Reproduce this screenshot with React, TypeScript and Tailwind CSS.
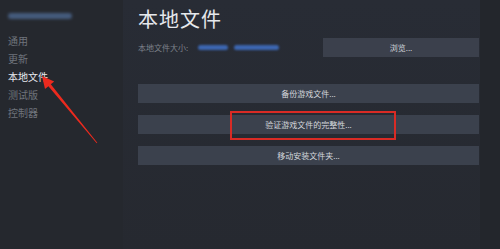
const font = { fontFamily: '"Noto Sans CJK SC", "Noto Sans", sans-serif' };

const navItems = ['通用', '更新', '本地文件', '测试版', '控制器'];

const actions = ['备份游戏文件...', '验证游戏文件的完整性...', '移动安装文件夹...'];

export default function App() {
  return (
    <div className="relative flex w-[500px] h-[249px] overflow-hidden bg-[#23262c]" style={font}>
      {/* sidebar */}
      <div className="w-[123px] shrink-0 bg-[#25282e] pl-[8px] pt-[13px]">
        <div className="h-[6px] w-[64px] rounded-sm bg-[#4d6890] blur-[1.5px] opacity-80" />
        <div className="mt-[14px] flex flex-col gap-[3px]">
          {navItems.map((item) => (
            <div
              key={item}
              className={`h-[15px] leading-[15px] text-[10px] ${item === '本地文件' ? 'text-[#e8eaee]' : 'text-[#6f747c]'}`}
            >
              {item}
            </div>
          ))}
        </div>
      </div>

      {/* main */}
      <div className="w-[357px] shrink-0 bg-gradient-to-b from-[#282c35] to-[#262930] pl-[15px] pr-[1px] pt-[6px]">
        <div className="text-[20px] leading-[26px] text-[#e6e8ec] tracking-[1px]">本地文件</div>
        <div className="mt-[6px] flex items-center h-[19px]">
          <span className="text-[8px] text-[#7d828b]">本地文件大小:</span>
          <span className="ml-[10px] h-[5px] w-[30px] rounded-sm bg-[#3c66b0] blur-[1px]" />
          <span className="ml-[6px] h-[5px] w-[45px] rounded-sm bg-[#3c66b0] blur-[1px]" />
          <button className="ml-auto w-[156px] h-[19px] bg-[#3b404c] text-[8px] text-[#cfd2d8]">浏览...</button>
        </div>
        <div className="mt-[27px] flex flex-col gap-[12px]">
          {actions.map((a) => (
            <button key={a} className="h-[19px] w-full bg-[#3b414d] text-[8px] text-[#d4d7dc]">
              {a}
            </button>
          ))}
        </div>
      </div>

      {/* red highlight box */}
      <div className="absolute left-[230px] top-[111px] w-[166px] h-[29px] border-2 border-[#d92b25]" />

      {/* red arrow */}
      <svg className="absolute left-0 top-0" width="500" height="249" viewBox="0 0 500 249">
        <polygon
          points="42,76 54.2,81.5 50.8,84.3 97.3,142.8 96.7,143.2 48.4,86.3 45,89.1"
          fill="#ec2a1e"
        />
      </svg>
    </div>
  );
}
